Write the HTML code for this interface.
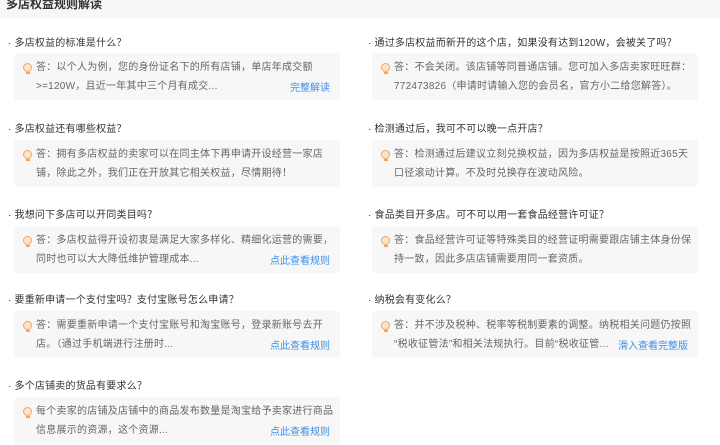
<!DOCTYPE html><html><head><meta charset="utf-8"><style>
body{margin:0;width:720px;height:445px;background:#fff;font-family:"Liberation Sans","Noto Sans CJK SC",sans-serif;position:relative;overflow:hidden}
.hd{position:absolute;left:0;top:0;width:720px;height:18px;background:#f7f7f7}
.hd span{position:absolute;left:6px;top:-5px;font-size:12px;font-weight:bold;color:#333}
.q{position:absolute;font-size:10px;color:#333;white-space:nowrap;letter-spacing:0.2px}
.b{position:absolute;background:#f7f7f7;border-radius:3px;width:326px;height:47px}
.b .t{position:absolute;left:22px;top:5px;font-size:10px;line-height:19px;color:#666;white-space:nowrap;letter-spacing:0.25px}
.b .ic{position:absolute;left:9px;top:10px;width:7px;height:7px;border:1.5px solid #f5a55d;border-radius:50%;background:#fde3cc}
.b .ic:after{content:"";position:absolute;left:2px;top:8px;width:4px;height:2px;background:#f5a55d}
.l{position:absolute;right:10px;bottom:6px;font-size:10px;color:#3d8fe6}
</style></head><body>
<div class="hd"><span>多店权益规则解读</span></div>

<div class="q" style="left:8px;top:34px">· 多店权益的标准是什么？</div>
<div class="b" style="left:14px;top:53px"><div class="ic"></div><div class="t">答：以个人为例，您的身份证名下的所有店铺，单店年成交额<br>&gt;=120W，且近一年其中三个月有成交...</div><div class="l">完整解读</div></div>

<div class="q" style="left:368px;top:34px">· 通过多店权益而新开的这个店，如果没有达到120W，会被关了吗？</div>
<div class="b" style="left:372px;top:53px"><div class="ic"></div><div class="t">答：不会关闭。该店铺等同普通店铺。您可加入多店卖家旺旺群：<br>772473826（申请时请输入您的会员名，官方小二给您解答）。</div></div>

<div class="q" style="left:8px;top:120px">· 多店权益还有哪些权益？</div>
<div class="b" style="left:14px;top:140px"><div class="ic"></div><div class="t">答：拥有多店权益的卖家可以在同主体下再申请开设经营一家店<br>铺，除此之外，我们正在开放其它相关权益，尽情期待！</div></div>

<div class="q" style="left:368px;top:120px">· 检测通过后，我可不可以晚一点开店？</div>
<div class="b" style="left:372px;top:140px"><div class="ic"></div><div class="t">答：检测通过后建议立刻兑换权益，因为多店权益是按照近365天<br>口径滚动计算。不及时兑换存在波动风险。</div></div>

<div class="q" style="left:8px;top:206px">· 我想问下多店可以开同类目吗？</div>
<div class="b" style="left:14px;top:226px"><div class="ic"></div><div class="t">答：多店权益得开设初衷是满足大家多样化、精细化运营的需要，<br>同时也可以大大降低维护管理成本...</div><div class="l">点此查看规则</div></div>

<div class="q" style="left:368px;top:206px">· 食品类目开多店。可不可以用一套食品经营许可证？</div>
<div class="b" style="left:372px;top:226px"><div class="ic"></div><div class="t">答：食品经营许可证等特殊类目的经营证明需要跟店铺主体身份保<br>持一致，因此多店店铺需要用同一套资质。</div></div>

<div class="q" style="left:8px;top:291px">· 要重新申请一个支付宝吗？支付宝账号怎么申请？</div>
<div class="b" style="left:14px;top:311px"><div class="ic"></div><div class="t">答：需要重新申请一个支付宝账号和淘宝账号，登录新账号去开<br>店。（通过手机端进行注册时...</div><div class="l">点此查看规则</div></div>

<div class="q" style="left:368px;top:291px">· 纳税会有变化么？</div>
<div class="b" style="left:372px;top:311px"><div class="ic"></div><div class="t">答：并不涉及税种、税率等税制要素的调整。纳税相关问题仍按照<br>“税收征管法”和相关法规执行。目前“税收征管...</div><div class="l">滑入查看完整版</div></div>

<div class="q" style="left:8px;top:377px">· 多个店铺卖的货品有要求么？</div>
<div class="b" style="left:14px;top:397px"><div class="ic"></div><div class="t">每个卖家的店铺及店铺中的商品发布数量是淘宝给予卖家进行商品<br>信息展示的资源，这个资源...</div><div class="l">点此查看规则</div></div>
</body></html>
